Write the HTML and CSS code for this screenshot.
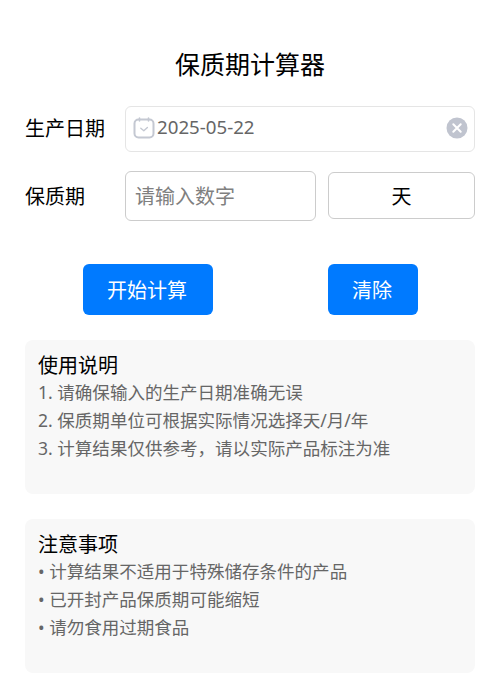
FILE: index.html
```html
<!DOCTYPE html>
<html lang="zh-CN">
<head>
    <meta charset="UTF-8">
    <meta name="viewport" content="width=device-width, initial-scale=1.0">
    <title>保质期计算器</title>
    <link rel="stylesheet" href="styles.css">
</head>
<body>
    <div class="container">
        <h1 class="title">保质期计算器</h1>

        <div class="form-row date-row">
            <span class="label">生产日期</span>
            <div class="date-picker">
                <svg class="calendar-icon" width="22" height="22" viewBox="0 0 22 22" fill="none">
                    <rect x="1.5" y="2.5" width="19" height="18" rx="4" stroke="#c4c8d2" stroke-width="2"/>
                    <path d="M6.5 1v3M15.5 1v3" stroke="#c4c8d2" stroke-width="1.6" stroke-linecap="round"/>
                    <path d="M7.8 11.3l3 2.5 3.6-3.3" stroke="#c4c8d2" stroke-width="1.4" stroke-linecap="round" stroke-linejoin="round"/>
                </svg>
                <span class="date-value">2025-05-22</span>
                <svg class="clear-icon" width="22" height="22" viewBox="0 0 22 22">
                    <circle cx="11" cy="11" r="10.5" fill="#c0c4cf"/>
                    <path d="M7.3 7.3l7.4 7.4M14.7 7.3l-7.4 7.4" stroke="#fff" stroke-width="2" stroke-linecap="round"/>
                </svg>
            </div>
        </div>

        <div class="form-row shelf-row">
            <span class="label">保质期</span>
            <input class="number-input" type="text" placeholder="请输入数字">
            <div class="unit-picker">天</div>
        </div>

        <div class="button-row">
            <button class="btn btn-calc">开始计算</button>
            <button class="btn btn-clear">清除</button>
        </div>

        <div class="tips">
            <div class="tips-title">使用说明</div>
            <div class="tips-line">1. 请确保输入的生产日期准确无误</div>
            <div class="tips-line">2. 保质期单位可根据实际情况选择天/月/年</div>
            <div class="tips-line">3. 计算结果仅供参考，请以实际产品标注为准</div>
        </div>

        <div class="tips">
            <div class="tips-title">注意事项</div>
            <div class="tips-line">• 计算结果不适用于特殊储存条件的产品</div>
            <div class="tips-line">• 已开封产品保质期可能缩短</div>
            <div class="tips-line">• 请勿食用过期食品</div>
        </div>
    </div>
</body>
</html>
```

FILE: styles.css
```css
* {
    box-sizing: border-box;
}

body {
    margin: 0;
    background: #fff;
    color: #000;
    font-family: "Noto Sans", "Noto Sans CJK SC", sans-serif;
}

.container {
    padding: 46px 25px 12px;
}

.title {
    margin: 0 0 24px;
    font-size: 25px;
    line-height: 36px;
    font-weight: 400;
    text-align: center;
}

.form-row {
    display: flex;
    align-items: center;
}

.label {
    width: 100px;
    flex-shrink: 0;
    font-size: 20px;
}

.date-row {
    margin-bottom: 19px;
}

.date-row .label {
    padding-bottom: 4px;
}

.date-picker {
    flex: 1;
    height: 46px;
    display: flex;
    align-items: center;
    padding: 0 6px 0 7px;
    border: 1px solid #e5e5e5;
    border-radius: 6px;
}

.calendar-icon {
    flex-shrink: 0;
    margin: 0 2px 3px 0;
}

.clear-icon {
    margin-bottom: 3px;
}

.date-value {
    flex: 1;
    font-size: 18.7px;
    color: #666;
    padding-bottom: 5px;
}

.shelf-row {
    gap: 12px;
    margin-bottom: 43px;
}

.shelf-row .label {
    margin-right: -12px;
    padding-bottom: 2px;
}

.number-input {
    width: 191px;
    height: 50px;
    padding: 0 9px;
    border: 1px solid #ccc;
    border-radius: 6px;
    font-family: inherit;
    font-size: 20px;
    outline: none;
}

.number-input::placeholder {
    color: #808080;
}

.unit-picker {
    flex: 1;
    height: 47px;
    margin-bottom: 1px;
    display: flex;
    align-items: center;
    justify-content: center;
    border: 1px solid #ccc;
    border-radius: 6px;
    font-size: 20px;
}

.button-row {
    display: flex;
    padding-left: 58px;
    margin-bottom: 25px;
}

.btn {
    height: 51px;
    padding: 0 2px 0 0;
    border: none;
    border-radius: 6px;
    background: #007aff;
    color: #fff;
    font-family: inherit;
    font-size: 20px;
}

.btn-calc {
    width: 130px;
    margin-right: 115px;
}

.btn-clear {
    width: 90px;
}

.tips {
    height: 154px;
    margin-bottom: 25px;
    padding: 14px 13px 12px;
    background: #f8f8f8;
    border-radius: 8px;
}

.tips-title {
    font-size: 20px;
    line-height: 24px;
}

.tips-line {
    font-size: 17.55px;
    line-height: 28px;
    color: #666;
}
```
